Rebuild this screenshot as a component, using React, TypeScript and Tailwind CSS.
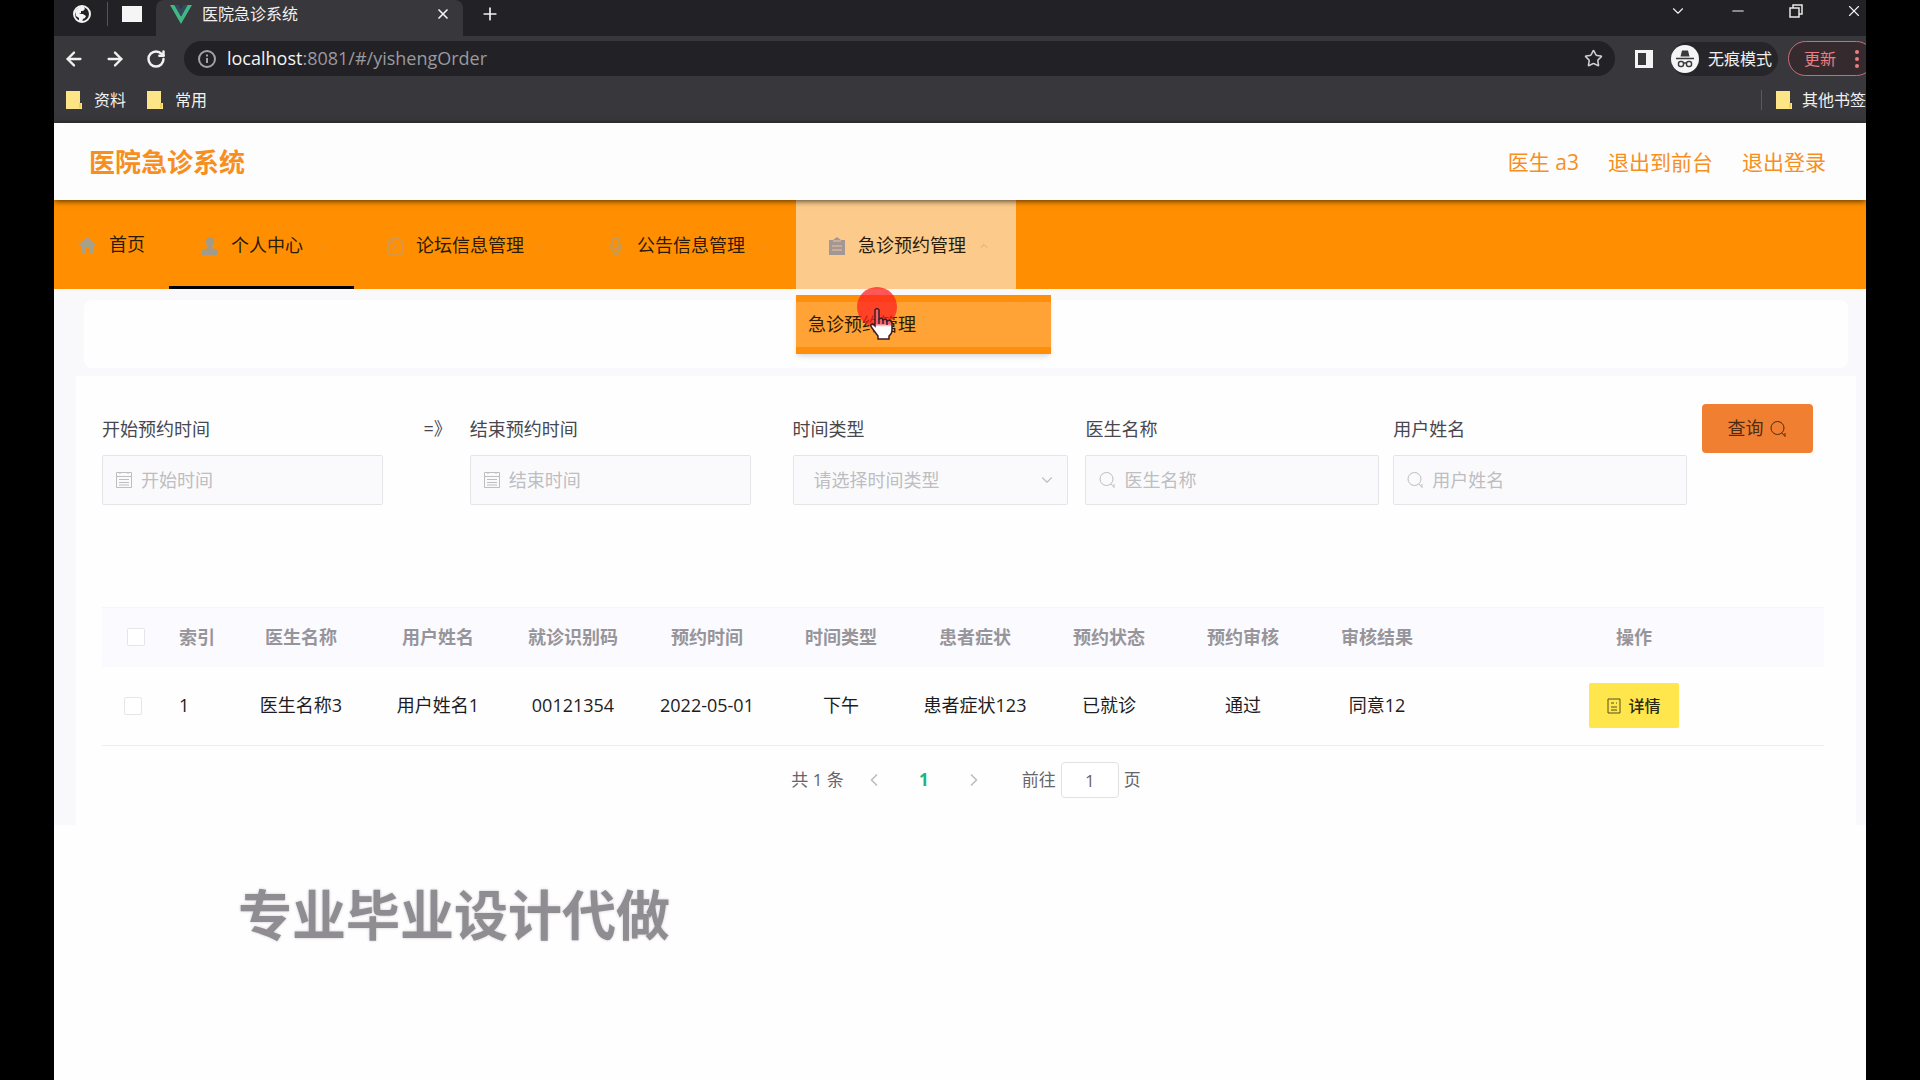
import type { ReactNode } from "react";
import {
  ArrowLeft,
  ArrowRight,
  ChevronDown,
  ChevronLeft,
  ChevronRight,
  ChevronUp,
  Minus,
  Plus,
  RotateCw,
  Star,
  X,
} from "lucide-react";

function GlobeIcon() {
  return (
    <svg viewBox="0 0 18 18" className="size-[18px]">
      <circle cx="9" cy="9" r="8" fill="none" stroke="#f4f4f4" strokeWidth="2" />
      <path d="M2 6l4-4 5 0 1 2-2 2-2 0 0 2-2 1 4 0 3 2-1 2-2 1-1 3-3-1 0-3-3-2z" fill="#f4f4f4" />
    </svg>
  );
}

function VueIcon() {
  return (
    <svg viewBox="0 0 22 19" className="h-[19px] w-[22px]">
      <path d="M0 0h4.5L11 11.500 17.500 0H22L11 19z" fill="#41b883" />
      <path d="M4.500 0H8.500L11 4.500 13.500 0h4L11 11.500z" fill="#35495e" />
    </svg>
  );
}

function InfoIcon() {
  return (
    <svg viewBox="0 0 18 18" className="size-[18px]" fill="none" stroke="#a3a2a7" strokeWidth="2">
      <circle cx="9" cy="9" r="8" />
      <path d="M9 8v5M9 4.500v2" />
    </svg>
  );
}

function FolderIcon() {
  return (
    <svg viewBox="0 0 16 18" className="h-[18px] w-4">
      <path d="M0 0h14v12h2v6H0z" fill="#fde587" />
      <path d="M13 12h2v5h-2z" fill="#f3cf55" />
    </svg>
  );
}

function IncognitoIcon() {
  return (
    <svg viewBox="0 0 28 28" className="size-7">
      <circle cx="14" cy="14" r="14" fill="#f5f5f5" />
      <path d="M9.500 11.500l1.500-6h6l1.500 6z" fill="#3a393d" />
      <path d="M5 13.500h18" stroke="#3a393d" strokeWidth="1.500" />
      <g fill="none" stroke="#3a393d" strokeWidth="1.500">
        <rect x="7.500" y="16.500" width="5" height="5" rx="2" />
        <rect x="15.500" y="16.500" width="5" height="5" rx="2" />
        <path d="M12.500 18h3" />
      </g>
    </svg>
  );
}

function SidePanelIcon() {
  return (
    <svg viewBox="0 0 18 18" className="size-[18px]">
      <path d="M0 0h18v18H0zM3 3v12h8V3z" fill="#f4f4f4" fillRule="evenodd" />
    </svg>
  );
}

function RestoreIcon() {
  return (
    <svg viewBox="0 0 14 14" className="size-[14px]" fill="none" stroke="#e8e8e8" strokeWidth="1.500">
      <path d="M1 4h9v9H1zM4 4V1h9v9h-3" />
    </svg>
  );
}

function HomeIcon() {
  return (
    <svg viewBox="0 0 18 18" className="size-[18px]" fill="#a8a08a">
      <path d="M9 1L0 9l1.500 1.500L3 9v8h4v-5h4v5h4V9l1.500 1.500L18 9z" />
    </svg>
  );
}

function UserIcon() {
  return (
    <svg viewBox="0 0 18 18" className="size-[18px]" fill="#a39b88">
      <path d="M9 0a4.500 5 0 0 0-2.500 9v2L1 13v5h16v-5l-5.500-2V9A4.500 5 0 0 0 9 0z" />
    </svg>
  );
}

function ForumIcon() {
  return (
    <svg viewBox="0 0 18 18" className="size-[18px]" fill="none" stroke="#cf9a56" strokeWidth="1.500">
      <path d="M6 1h6l4 4v12H2V5zM6 1v4H2M6 13l5-6" />
    </svg>
  );
}

function NoticeIcon() {
  return (
    <svg viewBox="0 0 18 18" className="size-[18px]" fill="none" stroke="#bf9c62" strokeWidth="1.500">
      <rect x="6" y="1" width="6" height="11" rx="3" />
      <path d="M4 7v3q1 5 5 5t5-5V7M9 15v2M6 17h6" />
    </svg>
  );
}

function ClipboardIcon() {
  return (
    <svg viewBox="0 0 18 18" className="size-[18px]">
      <path d="M1 3h4l4-3 4 3h4v15H1z" fill="#a29794" />
      <path d="M5 4h8M4 9h10M4 13h10" stroke="#efc591" strokeWidth="1" />
    </svg>
  );
}

function CalendarIcon() {
  return (
    <svg viewBox="0 0 18 18" className="size-[18px] shrink-0" fill="none" stroke="currentColor" strokeWidth="1">
      <path d="M1.500 1.500h15v15h-15zM1.500 5.500h15M4 8.500h10M4 11.500h10M4 14h10M5 1v2M13 1v2" />
    </svg>
  );
}

function SearchIcon() {
  return (
    <svg viewBox="0 0 18 18" className="size-[18px] shrink-0" fill="none" stroke="currentColor" strokeWidth="1">
      <circle cx="8.500" cy="8" r="6.500" />
      <path d="M13 13l3 3.500M16 13v3.500" />
    </svg>
  );
}

function DetailIcon() {
  return (
    <svg viewBox="0 0 14 16" className="h-4 w-[14px]" fill="none" stroke="#55501c" strokeWidth="1">
      <path d="M1 1h12v14H1zM4 5h3M4 9h6M4 12h6M9 5h1" />
    </svg>
  );
}

const navItems = [
  { title: "个人中心", icon: <UserIcon />, active: true },
  { title: "论坛信息管理", icon: <ForumIcon /> },
  { title: "公告信息管理", icon: <NoticeIcon /> },
];

const columns = ["医生名称", "用户姓名", "就诊识别码", "预约时间", "时间类型", "患者症状", "预约状态", "预约审核", "审核结果", "操作"];

const rows = [
  ["医生名称3", "用户姓名1", "00121354", "2022-05-01", "下午", "患者症状123", "已就诊", "通过", "同意12"],
];

function BrowserBar() {
  return (
    <div className="bg-[#38373b] text-base text-[#f1f1f1]">
      <div className="flex h-9 bg-[#222126]">
        <div className="flex h-7 w-[102px] items-center pl-[19px]">
          <GlobeIcon />
          <span className="ml-4 h-6 w-px bg-[#55545a]" />
          <span className="ml-[14px] h-4 w-5 bg-[#f5f5f5]" />
        </div>
        <div className="flex h-9 w-[307px] items-start rounded-t-lg bg-[#38373b] pl-[14px]">
          <div className="flex h-7 w-full items-center">
            <VueIcon />
            <span className="ml-[10px]">医院急诊系统</span>
            <button aria-label="关闭标签页" className="mr-3 ml-auto">
              <X className="size-4" strokeWidth={2.5} />
            </button>
          </div>
        </div>
        <button aria-label="新标签页" className="ml-[17px] h-7">
          <Plus className="size-5" strokeWidth={2} />
        </button>
        <div className="ml-auto flex h-[21px] items-center gap-[42px] pr-[3px]">
          <button aria-label="搜索标签页"><ChevronDown className="size-[18px]" strokeWidth={1.5} /></button>
          <button aria-label="最小化"><Minus className="size-[18px]" strokeWidth={1.5} /></button>
          <button aria-label="还原"><RestoreIcon /></button>
          <button aria-label="关闭"><X className="size-[18px]" strokeWidth={1.5} /></button>
        </div>
      </div>
      <div className="mt-[5px] flex h-[35px] items-center overflow-hidden pl-[9px]">
        <button aria-label="后退"><ArrowLeft className="size-[22px]" strokeWidth={2.5} /></button>
        <button aria-label="前进" className="ml-[19px]"><ArrowRight className="size-[22px]" strokeWidth={2.5} /></button>
        <button aria-label="刷新" className="ml-5"><RotateCw className="size-5" strokeWidth={3} /></button>
        <div className="ml-[18px] flex h-[35px] flex-1 items-center rounded-full bg-[#222125] pr-3 pl-[14px] text-[18px]">
          <InfoIcon />
          <span className="ml-[11px] text-[#9a999f]">
            <span className="text-[#f4f4f4]">localhost</span>:8081/#/yishengOrder
          </span>
          <button aria-label="收藏" className="ml-auto text-[#cfcfd2]"><Star className="size-[19px]" /></button>
        </div>
        <button aria-label="侧边栏" className="ml-5"><SidePanelIcon /></button>
        <div className="ml-[18px] flex h-[34px] items-center gap-[9px] rounded-full bg-[#262529] pr-[6px]">
          <IncognitoIcon />
          <span>无痕模式</span>
        </div>
        <button className="-mr-2 ml-[10px] flex h-[35px] w-[86px] items-center rounded-full border border-[#c96d76] bg-[#352b2f] pl-[15px] text-[#ee7c82]">
          更新
          <svg viewBox="0 0 4 18" className="ml-[19px] h-[18px] w-1" fill="#ee7c82">
            <circle cx="2" cy="2" r="2" />
            <circle cx="2" cy="9" r="2" />
            <circle cx="2" cy="16" r="2" />
          </svg>
        </button>
      </div>
      <div className="flex h-[47px] items-center pl-3 whitespace-nowrap">
        <a href="#" className="flex items-center gap-3"><FolderIcon />资料</a>
        <a href="#" className="ml-[21px] flex items-center gap-3"><FolderIcon />常用</a>
        <span className="ml-auto h-5 w-px bg-[#5b5a60]" />
        <a href="#" className="ml-[14px] flex items-center gap-[10px]"><FolderIcon />其他书签</a>
      </div>
    </div>
  );
}

function Nav() {
  return (
    <nav className="flex h-[89px] bg-[#ff8f00] text-[18px] text-[#2c1b04]">
      <a href="#" className="flex items-center gap-[13px] px-6">
        <HomeIcon />
        首页
      </a>
      {navItems.map((item) => (
        <button
          key={item.title}
          className={`flex items-center gap-3 border-b-[3px] pt-[5px] pr-[27px] pl-8 ${item.active ? "border-black" : "border-transparent"}`}
        >
          {item.icon}
          {item.title}
          <ChevronDown className="size-3 text-[#e89330]" />
        </button>
      ))}
      <div className="relative">
        <button className="flex h-full items-center gap-3 bg-[#fccb8c] pt-[2px] pr-[26px] pl-8">
          <ClipboardIcon />
          急诊预约管理
          <ChevronUp className="size-3 text-[#d3ab7c]" />
        </button>
        <div className="absolute top-full left-0 z-20 mt-[6px] w-[255px] bg-[#ff8f0a] py-[7px] shadow-md">
          <a href="#" className="block bg-[#ffa336] pl-3 leading-[45px]">急诊预约管理</a>
          {/* click highlight and pointer */}
          <div className="pointer-events-none absolute -top-2 left-[61px] size-10 rounded-full bg-[#ff2020]/75" />
          <svg viewBox="0 0 24 34" className="pointer-events-none absolute top-3 left-[74px] h-[34px] w-6">
            <defs>
              <linearGradient id="hand" x1="0" y1="0" x2="0" y2="1">
                <stop offset="0.5" stopColor="#f5606a" />
                <stop offset="0.6" stopColor="#ffffff" />
              </linearGradient>
            </defs>
            <path
              d="M5 3q2-3 4 0v9q3-2 4 1 3-2 4 1 4-2 5 2v7q0 4-3 6v3H8v-3L2 21q-3-4 1-4l2 2z"
              fill="url(#hand)"
              stroke="#3d1c26"
              strokeWidth="1.500"
            />
            <path d="M9 12v5M13 13v4M17 14v4" stroke="#3d1c26" strokeWidth="1.500" />
          </svg>
        </div>
      </div>
    </nav>
  );
}

type FieldProps = { id: string; label: string; placeholder: string; icon: ReactNode; className: string };

function Field({ id, label, placeholder, icon, className }: FieldProps) {
  return (
    <div className={className}>
      <label htmlFor={id} className="block leading-[51px]">{label}</label>
      <div className="flex h-[50px] items-center gap-2 rounded-xs border border-[#e4e4e9] bg-[#fafafc] pl-3 text-[#bdbdc2]">
        {icon}
        <input id={id} placeholder={placeholder} className="w-full min-w-0 bg-transparent outline-none placeholder:text-[#bdbdc2]" />
      </div>
    </div>
  );
}

function SearchForm() {
  return (
    <form className="mr-[17px] flex items-start text-[18px] text-[#48474d]">
      <Field id="start" label="开始预约时间" placeholder="开始时间" icon={<CalendarIcon />} className="grow basis-[281px]" />
      <span className="w-[87px] pr-[18px] text-right leading-[48px]">=》</span>
      <Field id="end" label="结束预约时间" placeholder="结束时间" icon={<CalendarIcon />} className="grow basis-[281px]" />
      <div className="ml-[42px] grow basis-[276px]">
        <label htmlFor="type" className="block leading-[51px]">时间类型</label>
        <div className="relative">
          <select
            id="type"
            defaultValue=""
            className="h-[50px] w-full appearance-none rounded-xs border border-[#e4e4e9] bg-[#fafafc] pl-5 text-[#bdbdc2] outline-none"
          >
            <option value="">请选择时间类型</option>
            <option value="am">上午</option>
            <option value="pm">下午</option>
          </select>
          <ChevronDown className="pointer-events-none absolute top-4 right-3 size-[18px] text-[#bdbdc2]" strokeWidth={1.5} />
        </div>
      </div>
      <Field id="doctor" label="医生名称" placeholder="医生名称" icon={<SearchIcon />} className="ml-[17px] grow basis-[294px]" />
      <Field id="user" label="用户姓名" placeholder="用户姓名" icon={<SearchIcon />} className="ml-[14px] grow basis-[294px]" />
      <button type="button" className="ml-[15px] flex h-[49px] w-[111px] shrink-0 items-center justify-center gap-[6px] rounded-sm bg-[#f17f31] text-[#4d2c14]">
        查询
        <SearchIcon />
      </button>
    </form>
  );
}

function Checkbox({ label }: { label: string }) {
  return (
    <input
      type="checkbox"
      aria-label={label}
      className="block size-[18px] appearance-none rounded-xs border border-[#e6e6ea] bg-white"
    />
  );
}

function OrderTable() {
  return (
    <table className="w-full table-fixed text-[18px]">
      <colgroup>
        <col className="w-[65px]" />
        <col className="w-[65px]" />
        <col className="w-[138px]" />
        <col className="w-[136px]" />
        {columns.slice(2, 9).map((name) => (
          <col key={name} className="w-[134px]" />
        ))}
        <col />
      </colgroup>
      <thead>
        <tr className="h-[59px] border-t border-[#f6f5f9] bg-[#fbfafe] text-[#96959b]">
          <th className="pl-[25px]"><Checkbox label="全选" /></th>
          <th className="pl-3 text-left font-semibold">索引</th>
          {columns.map((name) => (
            <th key={name} className="text-center font-semibold">{name}</th>
          ))}
        </tr>
      </thead>
      <tbody>
        {rows.map((row, idx) => (
          <tr key={idx} className="h-[79px] border-b border-[#ededf2] text-[#1d1c22]">
            <td className="pl-[22px]"><Checkbox label="选择" /></td>
            <td className="pl-3">{idx + 1}</td>
            {row.map((cell, i) => (
              <td key={i} className="text-center">{cell}</td>
            ))}
            <td>
              <button className="mx-auto flex h-[45px] w-[90px] items-center justify-center gap-[7px] rounded-xs bg-[#ffe64d] text-base font-medium text-[#2c2a0c]">
                <DetailIcon />
                详情
              </button>
            </td>
          </tr>
        ))}
      </tbody>
    </table>
  );
}

function Pagination() {
  return (
    <div className="mt-4 flex h-9 items-center justify-center text-[17px] text-[#66656b]">
      <span>共 1 条</span>
      <button aria-label="上一页" className="ml-5 text-[#bcbcc2]"><ChevronLeft className="size-5" /></button>
      <button className="w-[80px] font-bold text-[#20b47c]">1</button>
      <button aria-label="下一页" className="text-[#bcbcc2]"><ChevronRight className="size-5" /></button>
      <label htmlFor="page" className="ml-[38px]">前往</label>
      <input id="page" defaultValue="1" className="mx-[5px] h-9 w-[58px] rounded-sm border border-[#e2e2e6] bg-white text-center" />
      <span>页</span>
    </div>
  );
}

export default function App() {
  return (
    <div className="min-h-screen bg-black px-[54px] font-['Open_Sans','Noto_Sans_CJK_SC',sans-serif]">
      <div className="min-h-screen overflow-hidden bg-[#fefefe]">
        <BrowserBar />
        <header className="relative z-10 flex h-[77px] items-center justify-between bg-[#fdfdfd] pt-[2px] pr-10 pl-[35px] text-[#f78f1e] shadow-[0_1px_6px_rgba(0,0,0,0.7)]">
          <h1 className="text-[26px] font-bold">医院急诊系统</h1>
          <div className="flex gap-[29px] text-[21px]">
            <span>医生 a3</span>
            <a href="#">退出到前台</a>
            <a href="#">退出登录</a>
          </div>
        </header>
        <Nav />
        <main className="bg-[#f9f9fc] pt-[11px] pr-[10px] pl-[22px]">
          <div className="mx-2 h-[68px] rounded-lg bg-[#fefefe]" />
          <section className="mt-2 bg-[#fefefe] px-[26px] pt-7 pb-[27px]">
            <SearchForm />
            <div className="-mr-5 pt-[102px] pr-[26px]">
              <OrderTable />
            </div>
            <Pagination />
          </section>
        </main>
        <p className="mt-[60px] ml-[184px] text-[54px] leading-[60px] font-bold text-[#8f8d92] [text-shadow:0_0_3px_#c9c8cd]">专业毕业设计代做</p>
      </div>
    </div>
  );
}
